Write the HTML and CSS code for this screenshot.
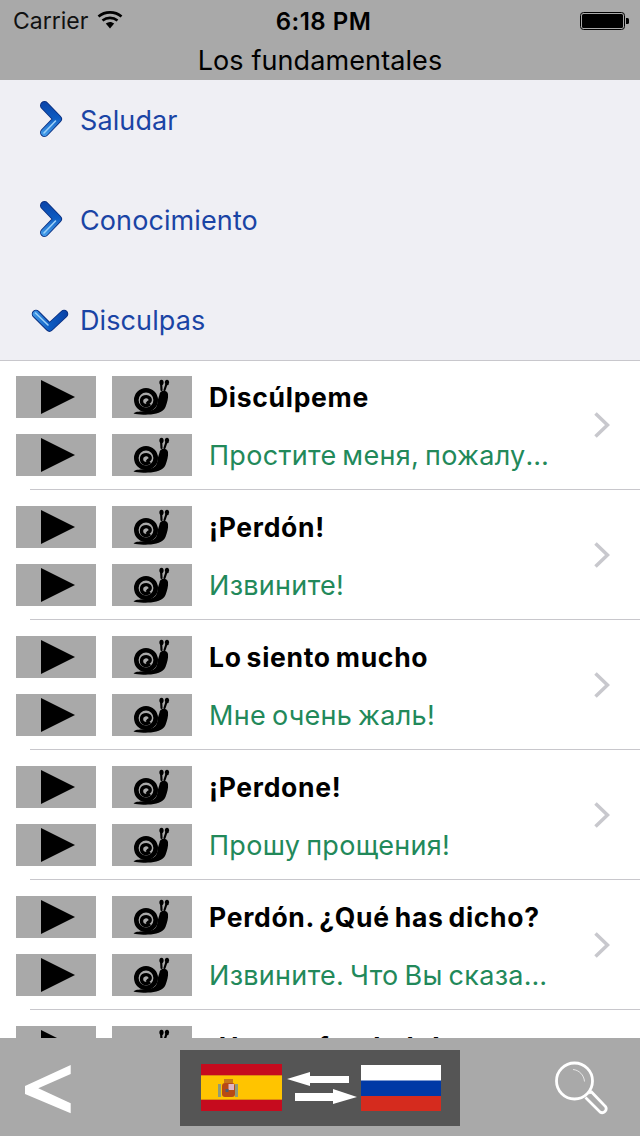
FILE: index.html
```html
<!DOCTYPE html>
<html lang="es">
<head>
<meta charset="utf-8">
<title>Los fundamentales</title>
<link rel="stylesheet" href="styles.css">
</head>
<body>
<svg class="defs" width="0" height="0">
  <defs>
    <linearGradient id="blue" gradientUnits="userSpaceOnUse" x1="0" y1="2" x2="0" y2="34">
      <stop offset="0" stop-color="#0a44a8"/>
      <stop offset=".5" stop-color="#0d5cc2"/>
      <stop offset="1" stop-color="#3f97e6"/>
    </linearGradient>
    <linearGradient id="blueh" gradientUnits="userSpaceOnUse" x1="2" y1="0" x2="35" y2="0">
      <stop offset="0" stop-color="#3f97e6"/>
      <stop offset=".5" stop-color="#0d5cc2"/>
      <stop offset="1" stop-color="#0a44a8"/>
    </linearGradient>
    <symbol id="play" viewBox="0 0 80 42"><path d="M25 4 59 21 25 38Z" fill="#000"/></symbol>
    <symbol id="snail" viewBox="0 0 80 42">
      <circle cx="34" cy="24" r="9.700" fill="none" stroke="#000" stroke-width="4.600"/>
      <path d="M38 28C34.500 31 29.500 29.500 29.500 25 29.500 20.500 35 19.500 37.500 22 39.500 25 36.500 27.500 34.500 26" fill="none" stroke="#000" stroke-width="3.300"/>
      <path d="M21.500 37.500C24 35 28 36 34 35 42 35 45.500 32 45.500 25L47.500 18.500C47.500 14 55 13 56 18 56.500 22 55 27 53.500 31 51 36.500 44 38.500 36 38.500 30 39 25 38.500 21.500 37.500Z" fill="#000"/>
      <path d="M49.500 14 49.200 8.500" stroke="#000" stroke-width="2.200" stroke-linecap="round"/>
      <ellipse cx="49.500" cy="6.500" rx="2.100" ry="2.800" fill="#000"/>
      <path d="M52.500 14 54.500 8" stroke="#000" stroke-width="2.200" stroke-linecap="round"/>
      <ellipse cx="55" cy="6.500" rx="2.100" ry="2.700" fill="#000"/>
    </symbol>
    <symbol id="right" viewBox="0 0 24 38">
      <path d="M5.500 5.500 18.500 19 5.500 32.500" fill="none" stroke="#0b2f80" stroke-width="9" stroke-linecap="round" stroke-linejoin="round"/>
      <path d="M5.500 5.500 18.500 19 5.500 32.500" fill="none" stroke="url(#blue)" stroke-width="7" stroke-linecap="round" stroke-linejoin="round"/>
      <path d="M5 33 16.500 21" fill="none" stroke="#9cd0f7" stroke-width="1.600" stroke-linecap="round"/>
    </symbol>
    <symbol id="down" viewBox="0 0 38 26">
      <path d="M5 6 18.500 19.500 33 6" fill="none" stroke="#0b2f80" stroke-width="8.500" stroke-linecap="round" stroke-linejoin="round"/>
      <path d="M5 6 18.500 19.500 33 6" fill="none" stroke="url(#blueh)" stroke-width="6.500" stroke-linecap="round" stroke-linejoin="round"/>
      <path d="M4.500 5 17 17" fill="none" stroke="#9cd0f7" stroke-width="1.600" stroke-linecap="round"/>
    </symbol>
    <symbol id="more" viewBox="0 0 16 26">
      <path d="M1.500 1.500 13.500 13 1.500 24.500" fill="none" stroke="#c8c8cd" stroke-width="3.600"/>
    </symbol>
  </defs>
</svg>

<header class="top">
  <div class="status">
    <div class="status-left">
      <span>Carrier</span>
      <svg class="wifi" width="26" height="19" viewBox="0 0 26 19">
        <path d="M1.500 6.500C8 1 18 1 24.500 6.500" fill="none" stroke="#000" stroke-width="2.700"/>
        <path d="M5.500 10.500C10 7 16 7 20.500 10.500" fill="none" stroke="#000" stroke-width="2.700"/>
        <path d="M8.800 13.600 13 18.500 17.200 13.600C14.500 11.500 11.500 11.500 8.800 13.600Z" fill="#000"/>
      </svg>
    </div>
    <div class="clock">6:18 PM</div>
    <svg class="battery" width="50" height="20" viewBox="0 0 50 20">
      <rect x=".5" y="1.500" width="44" height="17" rx="3" fill="none" stroke="#000"/>
      <rect x="2" y="3" width="41" height="14" rx="1.500" fill="#000"/>
      <path d="M46 7h1.500a1.500 1.500 0 0 1 1.500 1.500v3a1.500 1.500 0 0 1-1.500 1.500H46Z" fill="#000"/>
    </svg>
  </div>
  <h1 class="title">Los fundamentales</h1>
</header>

<section class="groups">
  <div class="group"><svg class="ico-right"><use href="#right"/></svg><span class="group-label">Saludar</span></div>
  <div class="group"><svg class="ico-right"><use href="#right"/></svg><span class="group-label">Conocimiento</span></div>
  <div class="group"><svg class="ico-down"><use href="#down"/></svg><span class="group-label">Disculpas</span></div>
</section>

<main class="list">
  <article class="row">
    <div class="btns">
      <button class="btn"><svg><use href="#play"/></svg></button><button class="btn"><svg><use href="#snail"/></svg></button>
      <button class="btn"><svg><use href="#play"/></svg></button><button class="btn"><svg><use href="#snail"/></svg></button>
    </div>
    <div class="texts"><p class="es">Discúlpeme</p><p class="ru">Простите меня, пожалуйста!</p></div>
    <svg class="more"><use href="#more"/></svg>
  </article>
  <article class="row">
    <div class="btns">
      <button class="btn"><svg><use href="#play"/></svg></button><button class="btn"><svg><use href="#snail"/></svg></button>
      <button class="btn"><svg><use href="#play"/></svg></button><button class="btn"><svg><use href="#snail"/></svg></button>
    </div>
    <div class="texts"><p class="es">¡Perdón!</p><p class="ru">Извините!</p></div>
    <svg class="more"><use href="#more"/></svg>
  </article>
  <article class="row">
    <div class="btns">
      <button class="btn"><svg><use href="#play"/></svg></button><button class="btn"><svg><use href="#snail"/></svg></button>
      <button class="btn"><svg><use href="#play"/></svg></button><button class="btn"><svg><use href="#snail"/></svg></button>
    </div>
    <div class="texts"><p class="es">Lo siento mucho</p><p class="ru">Мне очень жаль!</p></div>
    <svg class="more"><use href="#more"/></svg>
  </article>
  <article class="row">
    <div class="btns">
      <button class="btn"><svg><use href="#play"/></svg></button><button class="btn"><svg><use href="#snail"/></svg></button>
      <button class="btn"><svg><use href="#play"/></svg></button><button class="btn"><svg><use href="#snail"/></svg></button>
    </div>
    <div class="texts"><p class="es">¡Perdone!</p><p class="ru">Прошу прощения!</p></div>
    <svg class="more"><use href="#more"/></svg>
  </article>
  <article class="row">
    <div class="btns">
      <button class="btn"><svg><use href="#play"/></svg></button><button class="btn"><svg><use href="#snail"/></svg></button>
      <button class="btn"><svg><use href="#play"/></svg></button><button class="btn"><svg><use href="#snail"/></svg></button>
    </div>
    <div class="texts"><p class="es">Perdón. ¿Qué has dicho?</p><p class="ru">Извините. Что Вы сказали?</p></div>
    <svg class="more"><use href="#more"/></svg>
  </article>
  <article class="row">
    <div class="btns">
      <button class="btn"><svg><use href="#play"/></svg></button><button class="btn"><svg><use href="#snail"/></svg></button>
      <button class="btn"><svg><use href="#play"/></svg></button><button class="btn"><svg><use href="#snail"/></svg></button>
    </div>
    <div class="texts"><p class="es">¡Hemos fundado!</p></div>
    <svg class="more"><use href="#more"/></svg>
  </article>
</main>

<footer class="bottom">
  <svg class="back" width="50" height="50" viewBox="0 0 50 50">
    <path d="M47.700 0V9L15.300 23.300 47.700 38.300V48.300L2 29V21Z" fill="#fff"/>
  </svg>
  <div class="switch">
    <svg width="280" height="76" viewBox="0 0 280 76">
      <rect x="21" y="14" width="81" height="47" fill="#c60b1e"/>
      <rect x="21" y="25" width="81" height="25" fill="#e08a10"/>
      <rect x="21" y="26" width="81" height="23" fill="#ffc400"/>
      <rect x="38" y="34" width="3" height="13" fill="#8f9a7a"/>
      <rect x="55" y="34" width="3" height="13" fill="#8f9a7a"/>
      <rect x="44" y="29" width="9" height="4" fill="#c8761a"/>
      <rect x="42" y="33" width="13" height="14" rx="3" fill="#b84a14"/>
      <rect x="48.500" y="34" width="5.500" height="6" fill="#dfb5c5"/>
      <rect x="45.500" y="39" width="3" height="3" fill="#4e5a72"/>
      <path d="M107 29 130 22V26H169V33H130V36Z" fill="#fff"/>
      <path d="M177 47 153 39V43H115V51H153V54Z" fill="#fff"/>
      <rect x="181" y="15" width="80" height="16" fill="#fff"/>
      <rect x="181" y="30.500" width="80" height="15.500" fill="#0039a6"/>
      <rect x="181" y="46" width="80" height="15" fill="#d52b1e"/>
    </svg>
  </div>
  <svg class="search" width="56" height="56" viewBox="0 0 56 56">
    <circle cx="21.500" cy="22" r="18" fill="none" stroke="#fff" stroke-width="2.800"/>
    <path d="M20 10.500C26 11 31 16 31.500 22.500" fill="none" stroke="#fff" stroke-width="1" opacity=".7"/>
    <path d="M36 34 38.500 33 52.500 47.500A4 4 0 0 1 47 53L32.500 38.500" fill="none" stroke="#fff" stroke-width="2.800"/>
  </svg>
</footer>
</body>
</html>
```
FILE: styles.css
```css
* { box-sizing: border-box; margin: 0; padding: 0; }
html, body { height: 100%; }
body {
  width: 640px;
  height: 1136px;
  overflow: hidden;
  display: flex;
  flex-direction: column;
  background: #fff;
  font-family: Inter, "Liberation Sans", sans-serif;
  color: #000;
}
.defs { position: absolute; }

.top { height: 80px; flex: none; background: #a9a9a9; }
.status {
  height: 40px;
  padding: 2px 10px 0 13px;
  display: flex;
  align-items: center;
  justify-content: space-between;
  font-size: 23px;
  position: relative;
}
.status-left { display: flex; align-items: center; gap: 9px; color: #111; }
.wifi { margin-top: -4px; }
.clock {
  position: absolute;
  left: 7px;
  right: 0;
  text-align: center;
  font-weight: 600;
  font-size: 24px;
  letter-spacing: .5px;
}
.title {
  height: 40px;
  line-height: 42px;
  text-align: center;
  font-size: 27px;
  font-weight: 400;
  letter-spacing: .1px;
}

.groups {
  flex: none;
  height: 281px;
  background: #efeff4;
  border-bottom: 1px solid #c8c7cc;
  display: flex;
  flex-direction: column;
  gap: 20px;
}
.group {
  height: 80px;
  display: flex;
  align-items: center;
  position: relative;
  padding-left: 80px;
  font-size: 27px;
  color: #1a44a5;
}
.group-label { letter-spacing: .1px; }
.ico-right { position: absolute; width: 24px; height: 38px; left: 39px; top: 20px; }
.ico-down { position: absolute; width: 38px; height: 26px; left: 31px; top: 28px; }

.list { flex: 1; min-height: 0; overflow: hidden; }
.row {
  height: 130px;
  padding: 15px 30px 0 16px;
  display: flex;
  position: relative;
}
.row::after {
  content: "";
  position: absolute;
  left: 30px;
  right: 0;
  bottom: 1px;
  height: 1px;
  background: #c8c7cc;
}
.btns {
  flex: none;
  width: 176px;
  display: grid;
  grid-template-columns: 80px 80px;
  grid-auto-rows: 42px;
  column-gap: 16px;
  row-gap: 16px;
  align-content: start;
}
.btn { display: block; border: 0; width: 80px; height: 42px; background: #a9a9a9; }
.btn svg { display: block; width: 80px; height: 42px; }
.texts { width: 344px; margin-left: 17px; flex: none; }
.es, .ru { white-space: nowrap; overflow: hidden; text-overflow: ellipsis; word-spacing: -2px; }
.es { height: 42px; line-height: 42px; font-size: 26.500px; font-weight: 700; letter-spacing: .7px; }
.ru { height: 42px; margin-top: 17px; line-height: 42px; font-size: 27px; letter-spacing: .3px; color: #22895a; }
.more { position: absolute; width: 16px; height: 26px; left: 594px; top: 51px; }

.bottom {
  flex: none;
  height: 98px;
  background: #a9a9a9;
  position: relative;
  padding-top: 12px;
  display: flex;
  align-items: flex-start;
}
.back { position: absolute; left: 23px; top: 27px; }
.switch { width: 280px; height: 76px; margin-left: 180px; background: #555; }
.switch svg { display: block; }
.search { position: absolute; left: 553px; top: 21px; }
```
